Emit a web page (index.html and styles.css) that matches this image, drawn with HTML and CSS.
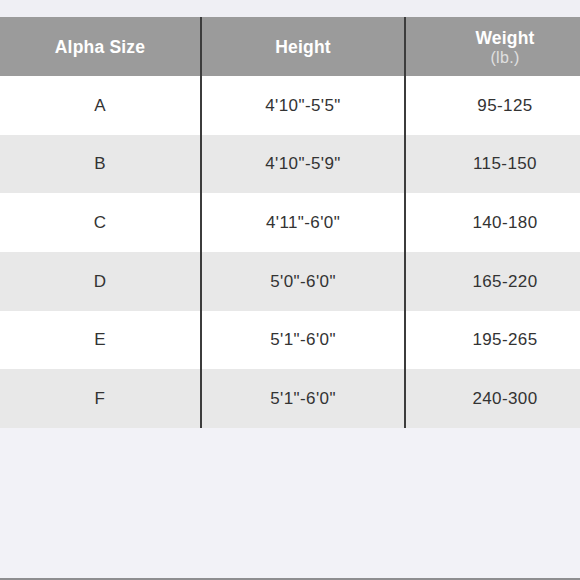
FILE: index.html
```html
<!DOCTYPE html>
<html>
<head>
<meta charset="utf-8">
<link rel="stylesheet" href="styles.css">
</head>
<body>
<div class="page">
  <div class="top"></div>
  <div class="table">
    <div class="row head">
      <div class="cell">Alpha Size</div>
      <div class="cell">Height</div>
      <div class="cell stack"><span>Weight</span><span class="unit">(lb.)</span></div>
    </div>
    <div class="row"><div class="cell">A</div><div class="cell">4'10"-5'5"</div><div class="cell">95-125</div></div>
    <div class="row alt"><div class="cell">B</div><div class="cell">4'10"-5'9"</div><div class="cell">115-150</div></div>
    <div class="row"><div class="cell">C</div><div class="cell">4'11"-6'0"</div><div class="cell">140-180</div></div>
    <div class="row alt"><div class="cell">D</div><div class="cell">5'0"-6'0"</div><div class="cell">165-220</div></div>
    <div class="row"><div class="cell">E</div><div class="cell">5'1"-6'0"</div><div class="cell">195-265</div></div>
    <div class="row alt"><div class="cell">F</div><div class="cell">5'1"-6'0"</div><div class="cell">240-300</div></div>
  </div>
  <div class="rest"></div>
</div>
</body>
</html>
```
FILE: styles.css
```css
html, body {
  margin: 0;
  padding: 0;
}
body {
  background: #f2f2f7;
  font-family: "Liberation Sans", Arial, sans-serif;
  overflow: hidden;
}
.page {
  width: 580px;
  height: 580px;
  overflow: hidden;
  display: flex;
  flex-direction: column;
  box-sizing: border-box;
  border-bottom: 2px solid #8e8e90;
}
.top {
  height: 17px;
  flex: none;
  background: #efeff4;
}
.table {
  display: flex;
  flex-direction: column;
  width: 604px;
  flex: none;
}
.row {
  display: grid;
  grid-template-columns: 200px 204px 200px;
  height: 58.67px;
  background: #ffffff;
}
.row.alt {
  background: #e8e8e8;
}
.row.head {
  height: 59px;
  background: #9b9b9b;
}
.cell {
  display: flex;
  align-items: center;
  justify-content: center;
  font-size: 17px;
  letter-spacing: 0.4px;
  color: #333333;
  padding-top: 1px;
}
.cell + .cell {
  border-left: 2px solid #3c3c3c;
}
.head .cell {
  color: #ffffff;
  font-weight: bold;
  font-size: 17.5px;
  letter-spacing: 0.2px;
}
.stack {
  flex-direction: column;
  line-height: 20px;
  padding-top: 2px;
}
.head .unit {
  font-weight: normal;
  color: #e0e0e0;
  font-size: 16px;
  letter-spacing: 0.3px;
}
.rest {
  flex: 1;
  background: #f2f2f7;
}
```
